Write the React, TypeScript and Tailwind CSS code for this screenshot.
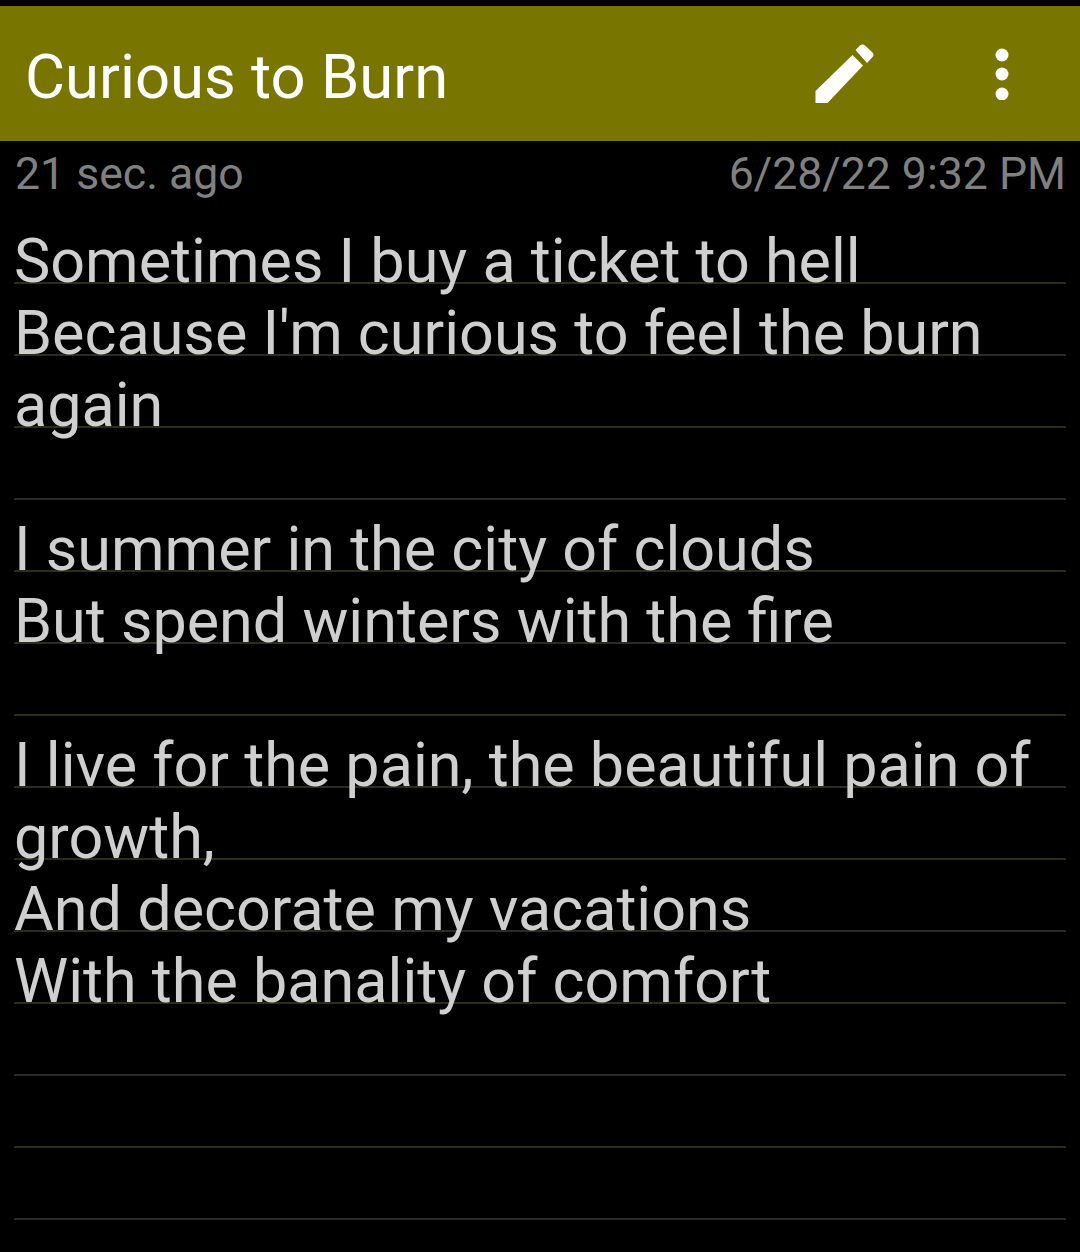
import React from 'react';

const lines = [
  'Sometimes I buy a ticket to hell',
  "Because I'm curious to feel the burn",
  'again',
  '',
  'I summer in the city of clouds',
  'But spend winters with the fire',
  '',
  'I live for the pain, the beautiful pain of',
  'growth,',
  'And decorate my vacations',
  'With the banality of comfort',
  '',
  '',
  '',
];

const App = () => {
  return (
    <div className="h-[1252px] w-[1080px] overflow-hidden bg-black pt-[6px] font-['Roboto',sans-serif]">
      <div className="flex h-[135px] items-center bg-[#787600] pl-[25px]">
        <h1 className="flex-1 pt-[6px] text-[61.600px] leading-[72px] text-white">Curious to Burn</h1>
        <svg className="mr-[120px] h-[60px] w-[60px]" viewBox="0 0 60 60" fill="#fff">
          <path d="M0.500 59V47L37.500 11L48 21.500L12.500 59Z" />
          <path d="M40.500 6L45 1.500Q47.500 -0.500 50 1.500L57.500 8.500Q59.500 11 57.500 13L52 19Z" />
        </svg>
        <svg className="mr-[71px] h-[52px] w-[14px]" viewBox="0 0 14 52" fill="#fff">
          <circle cx="7" cy="7" r="6.500" />
          <circle cx="7" cy="26" r="6.500" />
          <circle cx="7" cy="46" r="6.500" />
        </svg>
      </div>

      <div className="flex h-[71px] justify-between pl-[15px] pr-[14px] pt-[7px] text-[44.600px] leading-[52px] text-[#808080]">
        <span>21 sec. ago</span>
        <span>6/28/22 9:32 PM</span>
      </div>

      <div className="mx-[14px]">
        {lines.map((line, i) => (
          <div
            key={i}
            className="h-[72px] whitespace-pre border-b-[2px] border-[#2a2d18] text-[61.100px] leading-[98px] text-[#cfcfcf]"
          >
            {line}
          </div>
        ))}
      </div>
    </div>
  );
};

export default App;
